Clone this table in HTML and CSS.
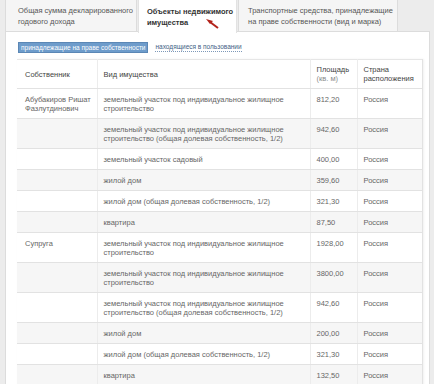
FILE: index.html
```html
<!DOCTYPE html>
<html lang="ru">
<head>
<meta charset="utf-8">
<link rel="stylesheet" href="styles.css">
</head>
<body>
<div class="page">
  <div class="tabs">
    <div class="tab tab-1">Общая сумма декларированного<br>годового дохода</div>
    <div class="tab tab-2 active">Объекты недвижимого<br>имущества</div>
    <div class="tab tab-3">Транспортные средства, принадлежащие<br>на праве собственности (вид и марка)</div>
    <svg class="cursor" width="16" height="14" viewBox="0 0 16 14">
      <polygon points="1,1 8,3 5,6" fill="#b3231b"/>
      <line x1="5" y1="4" x2="13" y2="10" stroke="#b3231b" stroke-width="2"/>
    </svg>
  </div>
  <div class="panel">
    <div class="filters">
      <span class="pill">принадлежащие на праве собственности</span>
      <span class="link">находящиеся в пользовании</span>
    </div>
    <table class="grid">
      <colgroup>
        <col class="c1"><col class="c2"><col class="c3"><col class="c4">
      </colgroup>
      <thead>
        <tr>
          <th class="first">Собственник</th>
          <th>Вид имущества</th>
          <th>Площадь<br><span class="unit">(кв. м)</span></th>
          <th>Страна<br>расположения</th>
        </tr>
      </thead>
      <tbody>
        <tr>
          <td class="first">Абубакиров Ришат<br>Фазлутдинович</td>
          <td>земельный участок под индивидуальное жилищное<br>строительство</td>
          <td>812,20</td><td>Россия</td>
        </tr>
        <tr class="alt">
          <td class="first"></td>
          <td>земельный участок под индивидуальное жилищное<br>строительство (общая долевая собственность, 1/2)</td>
          <td>942,60</td><td>Россия</td>
        </tr>
        <tr>
          <td class="first"></td>
          <td>земельный участок садовый</td>
          <td>400,00</td><td>Россия</td>
        </tr>
        <tr class="alt">
          <td class="first"></td>
          <td>жилой дом</td>
          <td>359,60</td><td>Россия</td>
        </tr>
        <tr>
          <td class="first"></td>
          <td>жилой дом (общая долевая собственность, 1/2)</td>
          <td>321,30</td><td>Россия</td>
        </tr>
        <tr class="alt">
          <td class="first"></td>
          <td>квартира</td>
          <td>87,50</td><td>Россия</td>
        </tr>
        <tr>
          <td class="first">Супруга</td>
          <td>земельный участок под индивидуальное жилищное<br>строительство</td>
          <td>1928,00</td><td>Россия</td>
        </tr>
        <tr class="alt">
          <td class="first"></td>
          <td>земельный участок под индивидуальное жилищное<br>строительство</td>
          <td>3800,00</td><td>Россия</td>
        </tr>
        <tr>
          <td class="first"></td>
          <td>земельный участок под индивидуальное жилищное<br>строительство (общая долевая собственность, 1/2)</td>
          <td>942,60</td><td>Россия</td>
        </tr>
        <tr class="alt">
          <td class="first"></td>
          <td>жилой дом</td>
          <td>200,00</td><td>Россия</td>
        </tr>
        <tr>
          <td class="first"></td>
          <td>жилой дом (общая долевая собственность, 1/2)</td>
          <td>321,30</td><td>Россия</td>
        </tr>
        <tr class="alt">
          <td class="first"></td>
          <td>квартира</td>
          <td>132,50</td><td>Россия</td>
        </tr>
      </tbody>
    </table>
  </div>
</div>
</body>
</html>
```

FILE: styles.css
```css
* { box-sizing: border-box; }
html, body { margin: 0; padding: 0; }
body {
  background: #ececec;
  font-family: "Liberation Sans", Arial, sans-serif;
  font-size: 7.5px;
  color: #666;
  width: 434px;
  height: 384px;
  overflow: hidden;
}
.page { padding-left: 5px; }
.tabs {
  position: relative;
  display: flex;
  align-items: flex-start;
  height: 32px;
}
.tab {
  height: 31px;
  padding: 5px 0 0 12px;
  line-height: 11px;
  font-size: 7.5px;
  background: #f5f5f5;
  border: 1px solid #dcdcdc;
  border-top: none;
  border-bottom: none;
  color: #555;
  white-space: nowrap;
}
.tab-1 { width: 132px; }
.tab-2 {
  width: 99px;
  padding-left: 8px;
  padding-top: 6px;
  background: #fff;
  height: 33px;
  font-weight: bold;
  color: #333;
  border-color: #e2e2e2;
  position: relative;
  z-index: 2;
  margin-left: 1px;
}
.tab-3 { width: 160px; margin-left: 1px; padding-left: 9px; }
.cursor {
  position: absolute;
  left: 200px;
  top: 18px;
  z-index: 3;
}
.panel {
  width: 425px;
  height: 360px;
  background: #fff;
  border: 1px solid #dcdcdc;
  margin-top: -1px;
  padding: 10px 7px 0 11px;
}
.filters {
  display: flex;
  align-items: center;
  height: 11px;
  font-size: 6.5px;
  margin-bottom: 6px;
}
.pill {
  display: inline-block;
  background: #6e9ccb;
  color: #fff;
  line-height: 9px;
  height: 11px;
  padding: 0 2px;
  margin-left: 1px;
  border: 1px solid #5b87b5;
}
.link {
  margin-left: 7px;
  color: #3f5f85;
  border-bottom: 1px dotted #7d98b8;
  line-height: 8px;
}
.grid {
  border-collapse: collapse;
  table-layout: fixed;
  width: 405px;
  border-top: 1px solid #e6e6e6;
  border-right: 1px solid #e2e2e2;
  box-shadow: 1px 0 2px rgba(0,0,0,0.06);
}
.c1 { width: 80px; }
.c2 { width: 213px; }
.c3 { width: 47px; }
.c4 { width: 65px; }
.grid th, .grid td {
  padding: 6px 5px 5px 6px;
  line-height: 9px;
  text-align: left;
  border-bottom: 1px solid #e2e2e2;
  border-left: 1px solid #ececec;
  white-space: nowrap;
  overflow: hidden;
}
.grid th {
  padding-top: 5px;
  font-weight: normal;
  color: #444;
  vertical-align: middle;
  background: #fff;
}
.grid th.first, .grid td.first { padding-left: 8px; border-left: none; }
.grid td { vertical-align: top; color: #666; }
.grid tr.alt td { background: #f6f6f6; }
.unit { color: #8a8a8a; }
```
